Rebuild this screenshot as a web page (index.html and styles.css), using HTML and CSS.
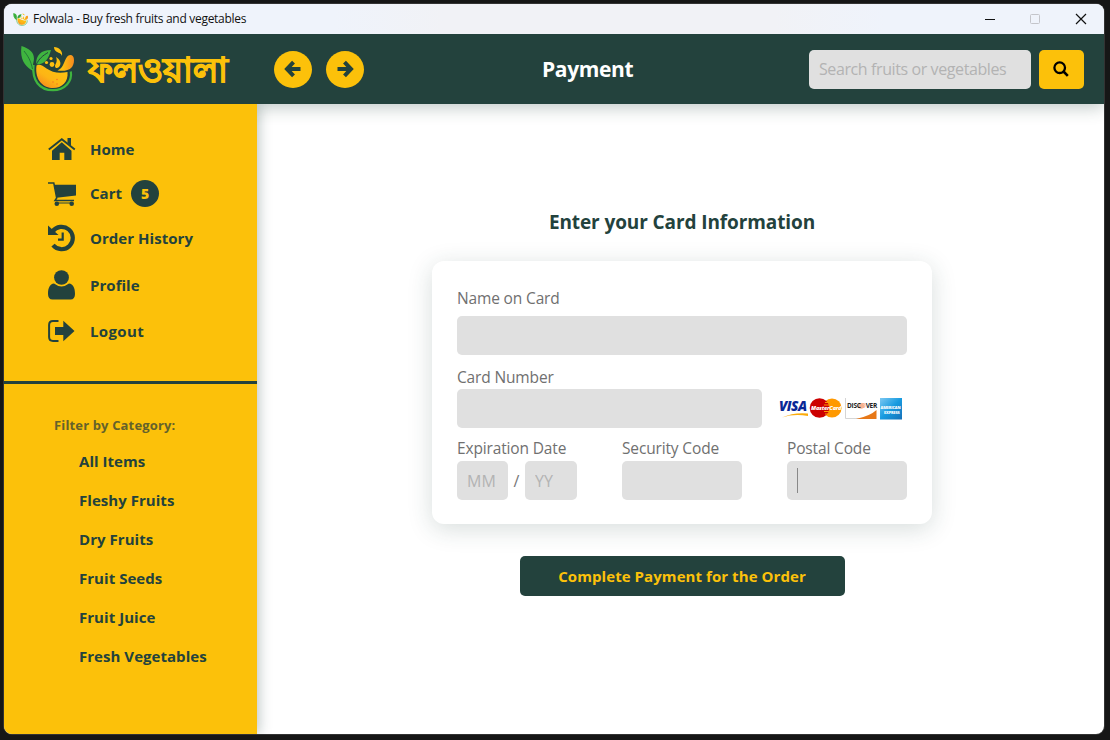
FILE: index.html
```html
<!DOCTYPE html>
<html lang="en">
<head>
<meta charset="utf-8">
<title>Folwala - Buy fresh fruits and vegetables</title>
<link rel="stylesheet" href="styles.css">
</head>
<body>
<svg class="defs" width="0" height="0">
  <defs>
    <linearGradient id="fruit" x1="0" y1="1" x2="0.7" y2="0.2"><stop offset="0" stop-color="#f47b20"/><stop offset=".55" stop-color="#fdb515"/><stop offset="1" stop-color="#fdc00f"/></linearGradient>
    <linearGradient id="segment" x1="0" y1="0" x2="1" y2="0"><stop offset=".3" stop-color="#fdc00f"/><stop offset="1" stop-color="#f58a1f"/></linearGradient>
    <linearGradient id="amex" x1="0" y1="0" x2="1" y2="1"><stop offset="0" stop-color="#7cc8f2"/><stop offset=".5" stop-color="#189be0"/><stop offset="1" stop-color="#1670b8"/></linearGradient>
    <symbol id="logo" viewBox="0 0 54 46">
      <path d="M13.500 19C12 34 19 44.200 33 44.200c12 0 19.500-9 17.800-18.700" fill="none" stroke="#3fb53f" stroke-width="2.200"/>
      <path d="M1.500 0C11 3 15.500 8 13.500 16c-.8 3.500-.5 5 0 9C5.500 21-.5 14 1.500 0z" fill="#3fb53f"/>
      <path d="M4 5c4 5 7 10 8.500 18" fill="none" stroke="#23753a" stroke-width="1"/>
      <path d="M31 4C21 4 16 9 16 18.500 25 18.500 28.500 13 31 4z" fill="#3fb53f"/>
      <path d="M28 6.500c-5 3-9 6-12 12.500" fill="none" stroke="#23423d" stroke-width="1"/>
      <path d="M16.500 19.500c3-2 6 0 10 3 6 4 12 5 21 3.500C48.500 36 42 42 33 42S14.500 35 16.500 19.500z" fill="url(#fruit)"/>
      <path d="M37.500 24.500c5-2 6-7 8.500-12s8-4.500 8 1.500c0 8-5 12-16.500 10.500z" fill="url(#segment)"/>
      <path d="M34 1c5 0 9 4 8 9-1-3-3-3-5-4s-3-3-3-5zM36 11c4 2 6 7 3 10-2 2-4 1-4-1s3-4 1-9z" fill="#fdc00f"/>
      <circle cx="31" cy="12.500" r="1.600" fill="#fdc00f"/><circle cx="26.500" cy="16.500" r="1.600" fill="#fdc00f"/><circle cx="32" cy="18.500" r="2.400" fill="#fdc00f"/>
      <circle cx="33" cy="36" r=".8" fill="#f47b20"/><circle cx="37" cy="33.500" r=".8" fill="#f47b20"/><circle cx="37" cy="38" r=".8" fill="#f47b20"/>
    </symbol>
    <symbol id="arrow" viewBox="0 0 18 18"><path d="M1.500 9h13" fill="none" stroke="currentColor" stroke-width="4"/><path d="M8.500 2.200L15 9l-6.500 6.800" fill="none" stroke="currentColor" stroke-width="4"/></symbol>
  </defs>
</svg>
<div class="window">
  <div class="titlebar">
    <svg class="favicon"><use href="#logo"/></svg>
    <span class="window-title">Folwala - Buy fresh fruits and vegetables</span>
    <svg class="controls" width="102" height="12" viewBox="0 0 102 12" fill="none">
      <path d="M0 6.500h10" stroke="#111"/><rect x="45.500" y="1.500" width="9" height="9" rx="1" stroke="#c4c5ca"/><path d="M91 1l10 10M101 1L91 11" stroke="#111" stroke-width="1.200"/>
    </svg>
  </div>
  <header class="header">
    <svg class="logo"><use href="#logo"/></svg>
    <span class="brand" lang="bn">ফলওয়ালা</span>
    <div class="history">
      <button class="round"><svg class="flip"><use href="#arrow"/></svg></button>
      <button class="round"><svg><use href="#arrow"/></svg></button>
    </div>
    <h1 class="page-title">Payment</h1>
    <div class="search">
      <input class="field search-field" placeholder="Search fruits or vegetables">
      <button class="search-button"><svg width="16" height="16" viewBox="0 0 16 16" fill="none" stroke="#000"><circle cx="6.700" cy="6.700" r="5.300" stroke-width="2.300"/><path d="M10.500 10.500l4.300 4.300" stroke-width="2.600"/></svg></button>
    </div>
  </header>
  <div class="body">
    <aside class="sidebar">
      <nav class="nav">
        <a class="nav-item"><svg width="28" height="23" viewBox="0 0 28 23"><path d="M19.500 0H23v8l-3.500-3zM4 12.800l9.800-8.600 9.700 8.600V22h-7.200v-7.300h-4.600V22H4z"/><path d="M.8 11.500L13.800 1.200l13 10.300" fill="none" stroke="currentColor" stroke-width="1.900"/></svg><span>Home</span></a>
        <a class="nav-item"><svg class="cart" width="28" height="25" viewBox="0 0 28 25"><path d="M6 2.800h22v10.600L8.700 15.800z"/><path d="M0 1h5.800l2.900 15-1.700 2.500h19" fill="none" stroke="currentColor" stroke-width="1.500"/><path d="M9 21h14" stroke="currentColor"/><circle cx="8.800" cy="21.800" r="2.300"/><circle cx="23.700" cy="21.800" r="2.300"/></svg><span>Cart</span><b class="badge">5</b></a>
        <a class="nav-item"><svg class="clock" width="28" height="28" viewBox="0 0 28 28"><path d="M0 1.500V11h10.500z"/><path d="M4.500 7.500A11.200 11.200 0 1 1 5 21.200" fill="none" stroke="currentColor" stroke-width="4.200"/><path d="M14.700 8.500v7.200H10" fill="none" stroke="currentColor" stroke-width="2.200"/></svg><span>Order History</span></a>
        <a class="nav-item profile"><svg width="28" height="30" viewBox="0 0 28 30"><ellipse cx="13.500" cy="7.500" rx="7.400" ry="7.300"/><path d="M6 13.600q7.500 5.800 15 0c4.200.3 6 4.600 6 10.400 0 3.500-1.500 5.500-4.500 5.500h-18C1.500 29.500 0 27.500 0 24c0-5.800 1.800-10.100 6-10.400z"/></svg><span>Profile</span></a>
        <a class="nav-item"><svg width="28" height="22" viewBox="0 0 28 22"><path d="M10.500 1.100H5Q1.100 1.100 1.100 5v12q0 3.900 3.900 3.900h5.500" fill="none" stroke="currentColor" stroke-width="2"/><path d="M7 7h8.300V.8L26.500 11 15.300 21.200V15H7z"/></svg><span class="logout">Logout</span></a>
      </nav>
      <div class="filter">
        <p class="filter-title">Filter by Category:</p>
        <a class="category">All Items</a>
        <a class="category">Fleshy Fruits</a>
        <a class="category">Dry Fruits</a>
        <a class="category">Fruit Seeds</a>
        <a class="category">Fruit Juice</a>
        <a class="category">Fresh Vegetables</a>
      </div>
    </aside>
    <main class="main">
      <h2 class="heading">Enter your Card Information</h2>
      <form class="card">
        <label class="label name-label">Name on Card</label>
        <input class="field">
        <label class="label number-label">Card Number</label>
        <div class="number-row">
          <input class="field">
          <svg class="brands" width="126" height="24" viewBox="0 0 126 24">
            <text x="0" y="14" class="visa">VISA</text>
            <path d="M3 20.500q12-5.500 26-4v2.500q-14-2.500-26 1.500z" fill="#fbab0a"/>
            <circle cx="53" cy="11" r="9.600" fill="#ff9900"/><circle cx="40.500" cy="11" r="9.800" fill="#cc0000"/>
            <path d="M46 5.500h5M45 8h5M45 14.500h5M46 17h5" stroke="#ff9900" stroke-width="1"/>
            <text x="32" y="13" class="mastercard">MasterCard</text>
            <path d="M66.500 1v20.500H97" fill="none" stroke="#d5d5d5"/>
            <path d="M77 22q14-3 20.500-9v9z" fill="#e77817"/>
            <circle cx="82.200" cy="8.800" r="2.900" fill="#f6b292"/>
            <text x="68" y="11" class="discover">DISC<tspan fill="#f6b292">O</tspan>VER</text>
            <rect x="101" y="1" width="22" height="21.500" fill="url(#amex)"/>
            <text x="101.500" y="11.500" class="amex">AMERICAN</text>
            <text x="105" y="16.500" class="amex">EXPRESS</text>
          </svg>
        </div>
        <div class="bottom-row">
          <div><label class="label">Expiration Date</label>
            <div class="date"><input class="field month" placeholder="MM"><span>/</span><input class="field year" placeholder="YY"></div></div>
          <div><label class="label">Security Code</label><input class="field"></div>
          <div><label class="label">Postal Code</label><div class="field focused"><i class="caret"></i></div></div>
        </div>
      </form>
      <button class="submit">Complete Payment for the Order</button>
    </main>
  </div>
</div>
</body>
</html>
```

FILE: styles.css
```css
* { box-sizing: border-box; }
body {
  margin: 0;
  width: 1110px;
  height: 740px;
  padding: 4px 6px 6px 4px;
  overflow: hidden;
  background: #161616;
  color: #23423d;
  font-family: "Open Sans", "Noto Sans", sans-serif;
}
.defs { display: block; position: absolute; }
button, input { border: 0; padding: 0; font: inherit; outline: 0; }
h1, h2, p { margin: 0; }
.window {
  display: flex;
  flex-direction: column;
  height: 730px;
  border-radius: 8px;
  overflow: hidden;
  background: #fff;
  box-shadow: 0 0 0 1px #333;
}
.titlebar {
  position: relative;
  z-index: 3;
  height: 30px;
  flex: none;
  display: flex;
  align-items: center;
  padding: 0 17px 0 9px;
  background: linear-gradient(90deg, #eff3fb 30%, #f1f2f6 40%, #f1f2f6 70%, #eff3fb 80%);
}
.favicon { width: 15px; height: 13px; margin-right: 5px; }
.window-title { font-size: 12px; line-height: 16px; letter-spacing: -0.29px; color: #111; padding-bottom: 1px; }
.controls { margin-left: auto; }
.header {
  position: relative;
  z-index: 1;
  height: 70px;
  flex: none;
  display: flex;
  align-items: center;
  padding: 0 20px 0 16px;
  background: #23423d;
  box-shadow: 0 3px 16px rgba(35, 66, 61, .3);
}
.logo { width: 54px; height: 46px; flex: none; }
.brand {
  width: 140px;
  margin-left: 14px;
  font-size: 33.500px;
  line-height: 50px;
  font-weight: 600;
  -webkit-text-stroke: 1px #fcc10a;
  color: #fcc10a;
  white-space: nowrap;
}
.history { display: flex; gap: 14px; margin-left: 46px; }
.round {
  width: 38px;
  height: 37px;
  border-radius: 50%;
  display: grid;
  place-items: center;
  background: #fcc10a;
  color: #23423d;
}
.round svg { width: 18px; height: 18px; }
.round .flip { transform: scaleX(-1); }
.page-title { margin-left: 178px; font-size: 21px; line-height: 28px; letter-spacing: -0.35px; color: #fff; font-weight: 700; }
.search { display: flex; gap: 8px; margin-left: auto; }
.field {
  display: block;
  width: 100%;
  height: 39px;
  border-radius: 5px;
  padding: 0 10px;
  background: #e0e0e0;
  font-size: 16px;
  color: #777;
}
.field::placeholder { color: #b3b3b3; opacity: 1; }
.search-field { width: 222px; letter-spacing: -0.4px; }
.search-button { width: 45px; height: 39px; border-radius: 5px; background: #fcc10a; display: grid; place-items: center; }
.search-button svg { margin-right: 1px; }
.body { flex: 1; display: flex; min-height: 0; }
.sidebar {
  position: relative;
  z-index: 2;
  width: 253px;
  flex: none;
  background: #fcc10a;
  box-shadow: 2px 0 12px rgba(35, 66, 61, .3);
  clip-path: inset(0 -24px 0 0);
}
.nav {
  height: 280px;
  padding: 23px 0 0 44px;
  display: grid;
  align-content: start;
  grid-template-rows: 44px 44px 46px 48px 44px;
  border-bottom: 3px solid #23423d;
}
.nav-item { display: flex; align-items: center; font-size: 15px; font-weight: 700; letter-spacing: 0.04px; }
.nav-item svg { fill: currentColor; flex: none; margin-right: 14px; }
.cart { position: relative; top: 1px; }
.logout { letter-spacing: 0.35px; }
.badge {
  width: 28px;
  height: 27px;
  border-radius: 50%;
  margin-left: 9px;
  background: #23423d;
  color: #fcc10a;
  text-align: center;
  line-height: 27px;
  font-size: 14px;
}
.filter { padding: 31px 0 0 50px; }
.filter-title { font-size: 13px; line-height: 20px; font-weight: 700; color: #65622b; padding-bottom: 7px; letter-spacing: 0.15px; }
.category { display: block; padding-left: 25px; font-size: 15px; line-height: 39px; font-weight: 700; letter-spacing: 0.04px; }
.main { flex: 1; display: flex; flex-direction: column; align-items: center; padding: 104px 0 0 3px; }
.heading { font-size: 19px; line-height: 28px; font-weight: 700; letter-spacing: -0.1px; }
.card {
  width: 500px;
  height: 263px;
  margin-top: 25px;
  padding: 25px;
  border-radius: 12px;
  background: #fff;
  box-shadow: 0 5px 25px rgba(35, 66, 61, .18);
}
.label { display: block; font-size: 15.500px; line-height: 24px; height: 24px; color: #707070; letter-spacing: -0.15px; white-space: nowrap; }
.name-label { margin-bottom: 6px; }
.number-label { margin: 10px 0 0; }
.number-row { display: flex; align-items: center; gap: 17px; }
.number-row .field { width: 305px; flex: none; }
.bottom-row { margin-top: 8px; display: grid; grid-template-columns: 120px 120px 120px; gap: 45px; }
.bottom-row .label { margin-bottom: 1px; }
.date { display: flex; align-items: center; justify-content: space-between; color: #777; }
.month { width: 51px; }
.year { width: 52px; }
.focused { display: flex; align-items: center; }
.caret { width: 1px; height: 25px; background: #888; }
.visa { font: italic 800 13.500px "Open Sans", sans-serif; letter-spacing: -0.5px; fill: #0a2896; }
.mastercard { font: italic 800 5.600px "Open Sans", sans-serif; letter-spacing: -0.2px; fill: #fff; }
.discover { font: 700 6.500px "Open Sans", sans-serif; letter-spacing: -0.25px; fill: #222; }
.amex { font: 800 3.800px "Open Sans", sans-serif; letter-spacing: -0.1px; fill: #fff; }
.submit {
  width: 325px;
  height: 40px;
  margin-top: 32px;
  padding-bottom: 1px;
  border-radius: 5px;
  background: #23423d;
  color: #fcc10a;
  font-size: 15px;
  letter-spacing: 0.07px;
  font-weight: 700;
}
```
